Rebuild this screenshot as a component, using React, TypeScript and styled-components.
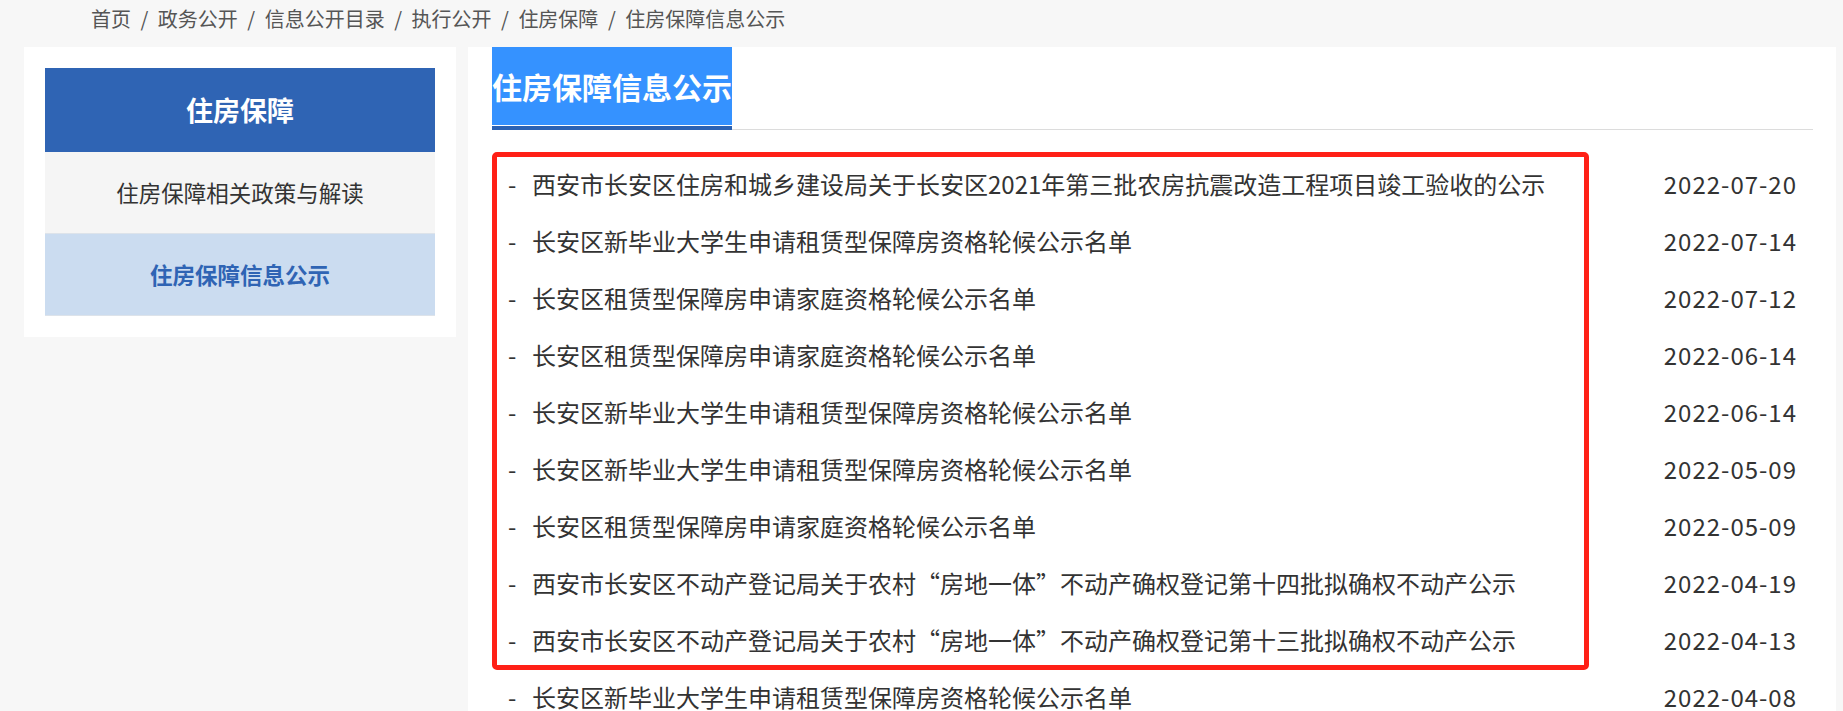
import styled, { createGlobalStyle } from 'styled-components';

const GlobalStyle = createGlobalStyle`
  html, body {
    margin: 0;
    padding: 0;
    background: #f7f7f7;
  }
  body {
    font-family: "Noto Sans CJK SC", "Noto Sans", sans-serif;
    color: #333;
  }
`;

const crumbs = ['首页', '政务公开', '信息公开目录', '执行公开', '住房保障', '住房保障信息公示'];

const navItems = [
  { label: '住房保障相关政策与解读', active: false },
  { label: '住房保障信息公示', active: true },
];

const notices = [
  { title: '西安市长安区住房和城乡建设局关于长安区2021年第三批农房抗震改造工程项目竣工验收的公示', date: '2022-07-20' },
  { title: '长安区新毕业大学生申请租赁型保障房资格轮候公示名单', date: '2022-07-14' },
  { title: '长安区租赁型保障房申请家庭资格轮候公示名单', date: '2022-07-12' },
  { title: '长安区租赁型保障房申请家庭资格轮候公示名单', date: '2022-06-14' },
  { title: '长安区新毕业大学生申请租赁型保障房资格轮候公示名单', date: '2022-06-14' },
  { title: '长安区新毕业大学生申请租赁型保障房资格轮候公示名单', date: '2022-05-09' },
  { title: '长安区租赁型保障房申请家庭资格轮候公示名单', date: '2022-05-09' },
  { title: '西安市长安区不动产登记局关于农村“房地一体”不动产确权登记第十四批拟确权不动产公示', date: '2022-04-19' },
  { title: '西安市长安区不动产登记局关于农村“房地一体”不动产确权登记第十三批拟确权不动产公示', date: '2022-04-13' },
  { title: '长安区新毕业大学生申请租赁型保障房资格轮候公示名单', date: '2022-04-08' },
];

const ROW_HEIGHT = 57;
const HIGHLIGHTED_ROWS = 9;

export default function App() {
  return (
    <>
      <GlobalStyle />
      <Page>
        <Breadcrumb>
          {crumbs.map((c, i) => (
            <span key={c + i}>
              {i > 0 && <Sep>/</Sep>}
              {c}
            </span>
          ))}
        </Breadcrumb>

        <Columns>
          <Sidebar>
            <SideNav>
              <SideTitle>住房保障</SideTitle>
              {navItems.map((item) => (
                <SideItem key={item.label} $active={item.active}>
                  {item.label}
                </SideItem>
              ))}
            </SideNav>
          </Sidebar>

          <Main>
            <TitleBar>
              <TitleTab>住房保障信息公示</TitleTab>
            </TitleBar>

            <List>
              {notices.map((n, i) => (
                <Row key={'notice' + i}>
                  <Dash>-</Dash>
                  <Title>{n.title}</Title>
                  <DateText>{n.date}</DateText>
                </Row>
              ))}
              <Highlight style={{ height: HIGHLIGHTED_ROWS * ROW_HEIGHT + 5 }} />
            </List>
          </Main>
        </Columns>
      </Page>
    </>
  );
}

const Page = styled.div`
  padding: 0 7px 0 24px;
  height: 711px;
  overflow: hidden;
`;

const Breadcrumb = styled.nav`
  padding-left: 67px;
  height: 47px;
  line-height: 37px;
  font-size: 20px;
  color: #555;
  white-space: nowrap;
`;

const Sep = styled.span`
  margin: 0 9.5px;
`;

const Columns = styled.div`
  display: flex;
  align-items: flex-start;
  gap: 12px;
`;

const Sidebar = styled.aside`
  width: 432px;
  flex-shrink: 0;
  background: #fff;
  padding: 21px;
  box-sizing: border-box;
`;

const SideNav = styled.div`
  display: flex;
  flex-direction: column;
`;

const SideTitle = styled.div`
  height: 84px;
  line-height: 84px;
  background: #2f64b4;
  color: #fff;
  font-size: 27px;
  font-weight: 700;
  text-align: center;
`;

const SideItem = styled.div<{ $active: boolean }>`
  height: 81px;
  line-height: 81px;
  border-bottom: 1px solid #dde3ea;
  text-align: center;
  font-size: 22.5px;
  background: ${({ $active }) => ($active ? '#cbdcf0' : '#f5f5f5')};
  color: ${({ $active }) => ($active ? '#2f64b4' : '#333')};
  font-weight: ${({ $active }) => ($active ? 700 : 400)};
`;

const Main = styled.main`
  flex: 1;
  min-height: 700px;
  background: #fff;
  padding: 0 23px 0 24px;
`;

const TitleBar = styled.div`
  display: flex;
  border-bottom: 1px solid #dcdcdc;
`;

const TitleTab = styled.h2`
  margin: 0 0 -1px;
  height: 78px;
  line-height: 78px;
  padding-bottom: 1px;
  background: #3592ff;
  background-clip: content-box;
  border-bottom: 4px solid #2c62b3;
  color: #fff;
  font-size: 30px;
  font-weight: 700;
  white-space: nowrap;
`;

const List = styled.ul`
  position: relative;
  list-style: none;
  margin: 26px 0 0;
  padding: 0;
`;

const Row = styled.li`
  display: flex;
  align-items: center;
  height: ${ROW_HEIGHT}px;
  padding: 0 16px;
  font-size: 24px;
  line-height: 1.1;
  color: #333;
  white-space: nowrap;
`;

const Dash = styled.span`
  width: 24px;
  flex-shrink: 0;
`;

const Title = styled.span`
  flex: 1;
`;

const DateText = styled.span`
  flex-shrink: 0;
  margin-left: 24px;
  letter-spacing: 1px;
`;

const Highlight = styled.div`
  position: absolute;
  left: 0;
  top: -4px;
  width: 1097px;
  box-sizing: border-box;
  border: 5px solid #ff2016;
  border-radius: 5px;
  pointer-events: none;
`;
